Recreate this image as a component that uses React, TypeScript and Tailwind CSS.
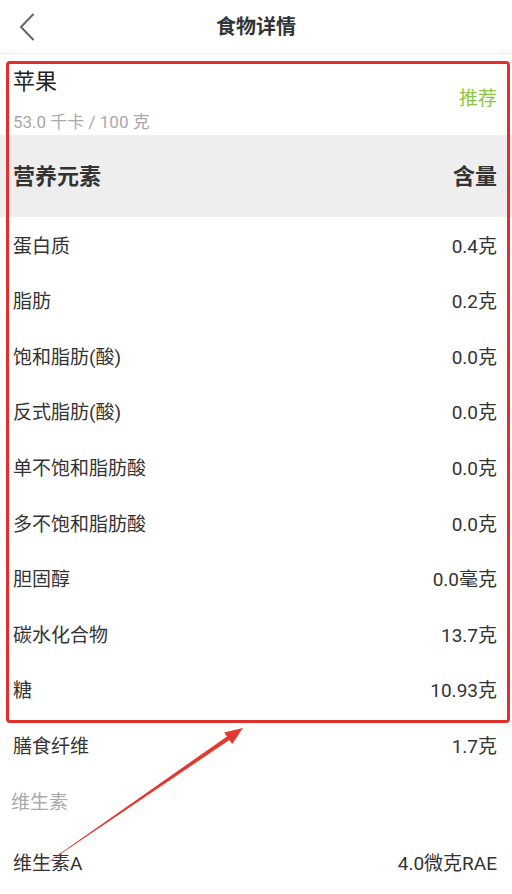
const font = "font-['Roboto','Noto_Sans_CJK_SC',sans-serif]";

const nutrients = [
  { name: "蛋白质", value: "0.4克" },
  { name: "脂肪", value: "0.2克" },
  { name: "饱和脂肪(酸)", value: "0.0克" },
  { name: "反式脂肪(酸)", value: "0.0克" },
  { name: "单不饱和脂肪酸", value: "0.0克" },
  { name: "多不饱和脂肪酸", value: "0.0克" },
  { name: "胆固醇", value: "0.0毫克" },
  { name: "碳水化合物", value: "13.7克" },
  { name: "糖", value: "10.93克" },
  { name: "膳食纤维", value: "1.7克" },
];

export default function App() {
  return (
    <div className={`relative h-[894px] w-full overflow-hidden bg-white ${font}`}>
      {/* top bar */}
      <header className="grid h-[54px] grid-cols-[1fr_auto_1fr] items-center border-b border-[#f0f0f2]">
        <div className="pl-[19px]">
          <svg width="16" height="28" viewBox="0 0 16 28" fill="none">
            <polyline points="14,1.5 2,14 14,26.5" stroke="#666" strokeWidth="2" strokeLinejoin="round" strokeLinecap="round" />
          </svg>
        </div>
        <h1 className="text-[20px] font-semibold text-[#333]">食物详情</h1>
        <div />
      </header>

      {/* food summary */}
      <section className="flex h-[81px] justify-between pl-[13px] pr-[15px]">
        <div className="pt-[14px]">
          <div className="text-[22px] leading-[28px] text-[#222]">苹果</div>
          <div className="mt-[14px] text-[17px] leading-[24px] text-[#a9a9a9]">53.0 千卡 / 100 克</div>
        </div>
        <div className="mt-[33px] text-[19px] leading-[24px] text-[#8cc63f]">推荐</div>
      </section>

      {/* table header */}
      <div className="flex h-[82px] items-center justify-between bg-[#efeeef] pl-[13px] pr-[15px] text-[22px] font-bold text-[#333]">
        <span>营养元素</span>
        <span>含量</span>
      </div>

      {/* nutrient rows */}
      <div className="pt-[2px]">
        {nutrients.map((n) => (
          <div key={n.name} className="flex h-[55.6px] items-center justify-between pl-[13px] pr-[15px] text-[19px] text-[#333]">
            <span>{n.name}</span>
            <span>{n.value}</span>
          </div>
        ))}
        <div className="flex h-[56px] items-center pl-[11px] text-[19px] text-[#aaa]">维生素</div>
        <div className="flex h-[60px] items-center justify-between pl-[13px] pr-[15px] pt-[6px] text-[19px] text-[#333]">
          <span>维生素A</span>
          <span>4.0微克RAE</span>
        </div>
      </div>

      {/* annotation */}
      <div className="pointer-events-none absolute left-[6px] top-[61px] h-[662px] w-[504px] rounded-[4px] border-[3px] border-[#e1302b]" />
      <svg className="pointer-events-none absolute left-0 top-0" width="512" height="894" viewBox="0 0 512 894">
        <polygon points="28,876 227,736.4 224.2,732.4 243,728 232.2,744 229.4,740" fill="#e5392e" />
      </svg>
    </div>
  );
}
